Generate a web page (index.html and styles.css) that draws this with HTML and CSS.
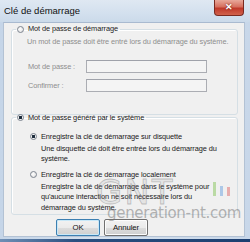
FILE: index.html
```html
<!DOCTYPE html>
<html lang="fr">
<head>
<meta charset="utf-8">
<title>Clé de démarrage</title>
<link rel="stylesheet" href="styles.css">
</head>
<body>
<div class="win">
  <div class="titlebar">
    <span class="title">Clé de démarrage</span>
    <div class="close">✕</div>
  </div>
  <div class="panel">
    <fieldset class="group g1">
      <legend><span class="radio"></span><span class="dark">Mot de passe de démarrage</span></legend>
      <p class="desc dis">Un mot de passe doit être entré lors du démarrage du système.</p>
      <div class="field f1"><span class="lbl dis">Mot de passe :</span><span class="input"></span></div>
      <div class="field f2"><span class="lbl dis">Confirmer :</span><span class="input"></span></div>
    </fieldset>
    <fieldset class="group g2">
      <legend><span class="radio on"></span><span class="dark">Mot de passe généré par le système</span></legend>
      <div class="opt o1">
        <div class="optrow"><span class="radio on"></span><span class="dark">Enregistre la clé de démarrage sur disquette</span></div>
        <p class="sub">Une disquette clé doit être entrée lors du démarrage du<br>système.</p>
      </div>
      <div class="opt o2">
        <div class="optrow"><span class="radio"></span><span class="dark">Enregistre la clé de démarrage localement</span></div>
        <p class="sub">Enregistre la clé de démarrage dans le système pour<br>qu'aucune interaction ne soit nécessaire lors du<br>démarrage du système.</p>
      </div>
    </fieldset>
    <div class="buttons">
      <div class="btn ok">OK</div>
      <div class="btn">Annuler</div>
    </div>
    <div class="watermark">
      <span class="gnt">GNT</span>
      <span class="bars"><i class="b1"></i><i class="b2"></i><i class="b3"></i></span>
      <span class="site">generation-nt.com</span>
    </div>
  </div>
  <div class="taskbar"></div>
</div>
</body>
</html>
```
FILE: styles.css
```css
* { box-sizing: border-box; }
html, body { margin: 0; padding: 0; }
body {
  width: 250px;
  height: 242px;
  overflow: hidden;
  font-family: "Liberation Sans", Arial, sans-serif;
  font-size: 7.4px;
  letter-spacing: -0.1px;
  color: #1a1a1a;
  background: #c9d8ea;
}
.win {
  width: 250px;
  height: 242px;
  display: flex;
  flex-direction: column;
  background: linear-gradient(90deg, #c5d5e8 0, #d5e1ee 40%, #c8d7e9 100%);
}
.titlebar {
  height: 22px;
  flex: none;
  display: flex;
  align-items: flex-start;
  justify-content: space-between;
  background: linear-gradient(180deg, #dfe8f2 0, #d3e0ee 60%, #cbdaea 100%);
}
.title {
  font-family: "Liberation Sans", Arial, sans-serif;
  font-size: 9.5px;
  letter-spacing: 0;
  color: #101010;
  padding: 5px 0 0 4px;
  line-height: 11px;
}
.close {
  width: 30px;
  height: 16px;
  margin-right: 6px;
  border: 1px solid #7a2a20;
  border-top: none;
  border-radius: 0 0 4px 4px;
  background: linear-gradient(180deg, #e8a89a 0, #d6705f 45%, #c0392a 55%, #d0624c 100%);
  color: #fff;
  font-size: 9px;
  font-weight: bold;
  text-align: center;
  line-height: 15px;
  text-shadow: 0 0 2px #5a1008;
}
.panel {
  position: relative;
  flex: none;
  height: 215px;
  margin: 0 5px 0 3px;
  background: #f0f0f0;
  border: 1px solid #b3c2d4;
  border-top-color: #a9bad0;
  padding: 0 0 0 7px;
  display: flex;
  flex-direction: column;
}
.group {
  margin: 0;
  width: 227px;
  border: 1px solid #d5dfe5;
  border-radius: 3px;
  padding: 0;
  box-shadow: inset 1px 1px 0 #fff;
}
.group legend {
  display: flex;
  align-items: center;
  padding: 0 2px 0 1px;
  margin-left: 4px;
  height: 10px;
  line-height: 10px;
}
.dark { color: #1a1a1a; }
.dis { color: #8e8e8e; }
.radio {
  display: inline-block;
  width: 7px;
  height: 7px;
  border-radius: 50%;
  border: 1px solid #7d8590;
  background: radial-gradient(circle at 40% 40%, #ffffff 0, #e6e6e6 70%, #cfcfcf 100%);
  margin-right: 4px;
  flex: none;
}
.radio.on {
  background: radial-gradient(circle, #1b2a3a 0, #1b2a3a 1.4px, #f4f4f4 1.8px, #e0e0e0 100%);
}
.g1 { height: 91px; margin-top: 1px; }
.desc { margin: 3px 0 0 15px; line-height: 10px; white-space: nowrap; }
.field {
  display: flex;
  align-items: center;
  height: 13px;
  margin-left: 16px;
}
.f1 { margin-top: 13px; }
.f2 { margin-top: 6px; }
.lbl { width: 58px; }
.input {
  width: 121px;
  height: 13px;
  border: 1px solid #abadb3;
  border-top-color: #9fa2aa;
  background: #f4f4f4;
}
.g2 { height: 103px; margin-top: -2px; }
.opt { margin-left: 18px; }
.o1 { margin-top: 9px; }
.o2 { margin-top: 5px; }
.optrow {
  display: flex;
  align-items: center;
  height: 10px;
  line-height: 10px;
}
.sub {
  margin: 2px 0 0 11px;
  line-height: 10.5px;
  white-space: nowrap;
  color: #1a1a1a;
}
.buttons {
  display: flex;
  gap: 4px;
  margin: 4px 0 0 45px;
}
.btn {
  width: 44px;
  height: 17px;
  border: 1px solid #707070;
  border-radius: 2px;
  background: linear-gradient(180deg, #f2f2f2 0, #ebebeb 50%, #dddddd 51%, #cfcfcf 100%);
  text-align: center;
  line-height: 15px;
  font-size: 7.8px;
  color: #111;
  box-shadow: inset 0 0 0 1px #fcfcfc;
}
.btn.ok { border-color: #3c7fb1; box-shadow: inset 0 0 0 1px #c8e8f8; }
.watermark {
  position: absolute;
  left: 92px;
  top: 152px;
  width: 150px;
  height: 50px;
  pointer-events: none;
}
.gnt {
  position: absolute;
  left: 0;
  top: 0;
  font-family: "DejaVu Sans", sans-serif;
  font-size: 34px;
  line-height: 34px;
  letter-spacing: 2px;
  color: rgba(150, 150, 150, 0.15);
  -webkit-text-stroke: 0.8px rgba(120, 120, 120, 0.4);
}
.bars {
  position: absolute;
  left: 117px;
  top: 7px;
  display: flex;
  align-items: flex-end;
  gap: 4px;
  height: 14px;
}
.bars i { display: block; width: 3px; }
.b1 { height: 14px; background: rgba(120, 190, 70, 0.45); }
.b2 { height: 10px; background: rgba(90, 150, 220, 0.45); }
.b3 { height: 9px; background: rgba(220, 90, 90, 0.45); }
.site {
  position: absolute;
  left: 11px;
  top: 30px;
  font-family: "DejaVu Sans", sans-serif;
  font-size: 15px;
  line-height: 16px;
  color: rgba(110, 110, 110, 0.5);
  letter-spacing: -0.3px;
}
.taskbar {
  flex: 1;
  margin-top: 2px;
  background: linear-gradient(90deg, #6f8fb5 0, #2a4f80 30%, #1d3f70 100%);
}
```
